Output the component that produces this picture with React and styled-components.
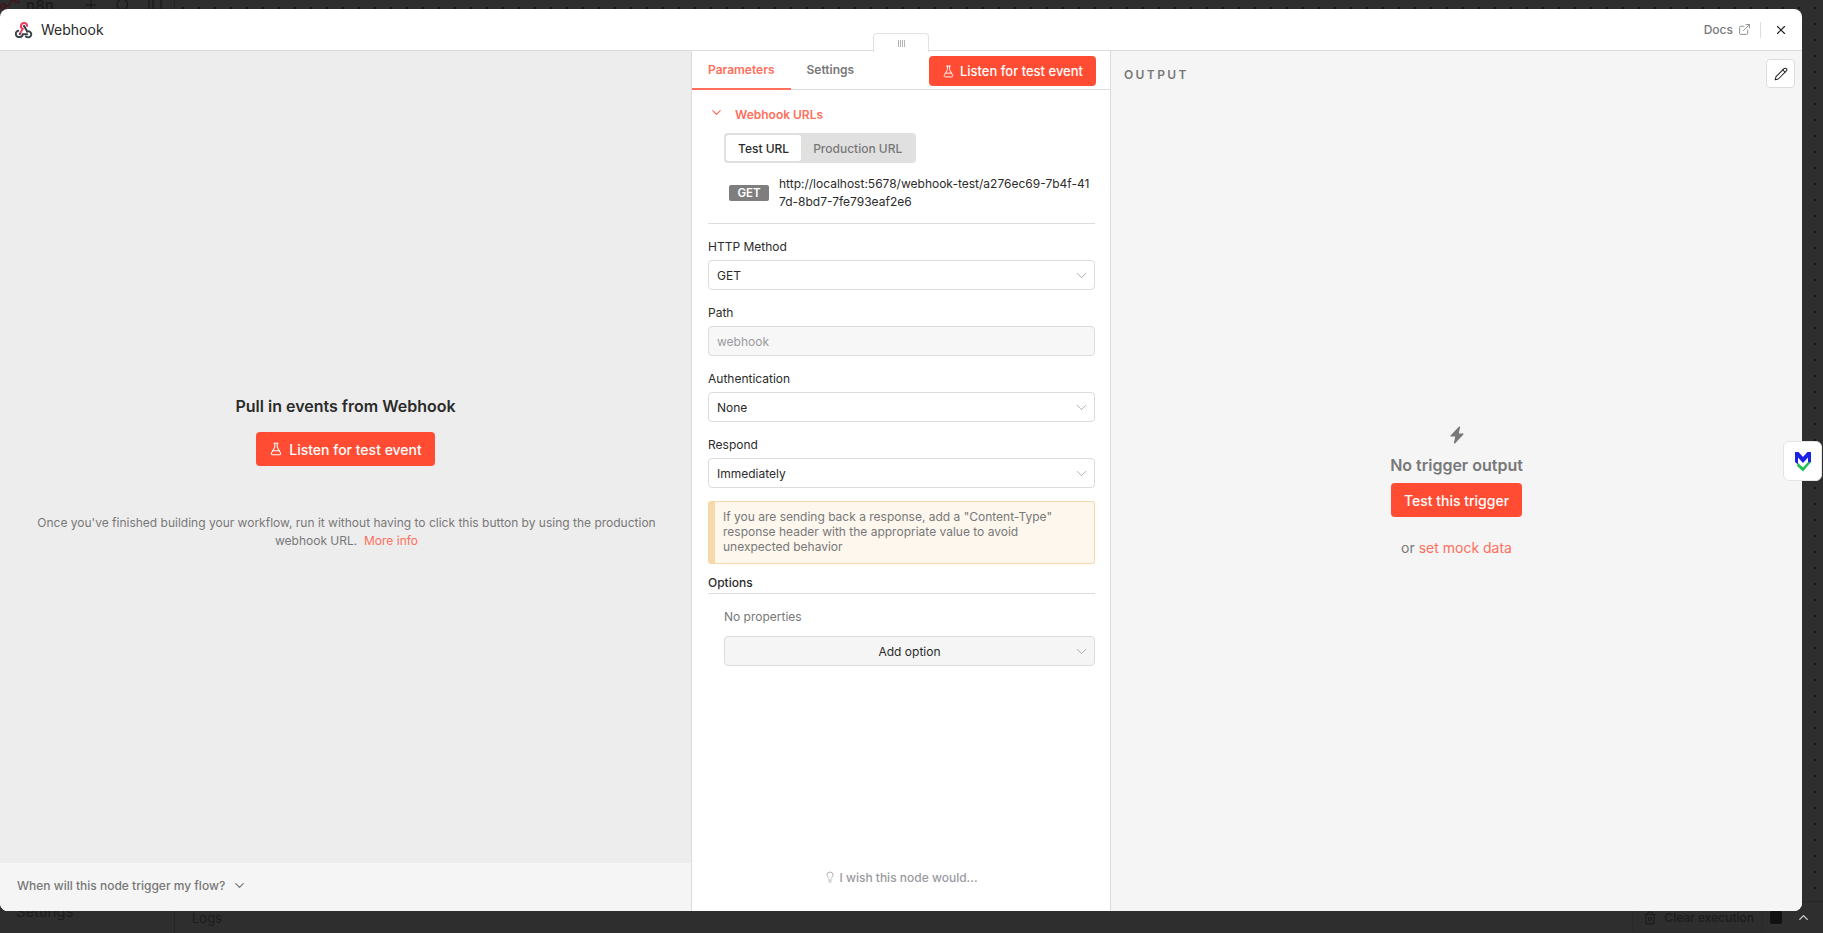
import styled, { createGlobalStyle } from "styled-components";
import {
  ChevronDown,
  ChevronUp,
  ExternalLink,
  FlaskConical,
  Lightbulb,
  PanelLeft,
  Pencil,
  Plus,
  Search,
  Trash2,
  X,
} from "lucide-react";

const GlobalStyle = createGlobalStyle`
  html, body {
    margin: 0;
    height: 100%;
    background: #2e2e2e;
    font-family: Inter, "Liberation Sans", sans-serif;
  }
  * {
    box-sizing: border-box;
  }
`;

const Page = styled.div`
  position: relative;
  width: 1823px;
  height: 933px;
  overflow: hidden;
  display: grid;
  grid-template-columns: 175px 1fr;
  background: #2e2e2e;
  color: #1c1c1c;
`;

const Sidebar = styled.div`
  display: flex;
  flex-direction: column;
  justify-content: space-between;
  border-right: 1px solid #262626;
`;

const SideTop = styled.div`
  display: flex;
  align-items: center;
  height: 16px;
  margin-top: -3px;
  font-size: 15px;
  font-weight: 600;
`;

const SideLogo = styled.span`
  display: flex;
  width: 26px;
`;

const SideIcons = styled.div`
  display: flex;
  gap: 16px;
  margin-left: 29px;
`;

const SideBottom = styled.div`
  padding: 0 0 12px 16px;
  font-size: 15px;
`;

const Main = styled.div`
  display: flex;
  flex-direction: column;
  background-color: #2e2e2e;
  background-image: radial-gradient(#151515 0.8px, transparent 1px);
  background-size: 16px 16px;
`;

const Canvas = styled.div`
  flex: 1;
`;

const LogsBar = styled.div`
  height: 32px;
  padding: 0 12px 0 17px;
  display: flex;
  align-items: center;
  justify-content: space-between;
  font-size: 13px;
  background: #2e2e2e;
  border-top: 1px solid #262626;
`;

const LogsActions = styled.div`
  display: flex;
  align-items: center;
`;

const ClearExec = styled.div`
  display: flex;
  align-items: center;
  gap: 7px;
  height: 30px;
  padding: 0 8px 0 10px;
  border: 1px solid #2a2a2a;
  border-radius: 4px;
  font-size: 12px;
  font-weight: 500;
`;

const PopOut = styled.span`
  width: 12px;
  height: 13px;
  margin: 0 14px 0 7px;
  border-radius: 2px;
  background: #111;
`;

const Modal = styled.div`
  position: absolute;
  left: 0;
  top: 9px;
  width: 1802px;
  height: 902px;
  display: flex;
  flex-direction: column;
  background: #fff;
  border-radius: 8px;
  overflow: hidden;
`;

const Header = styled.header`
  flex: none;
  height: 42px;
  display: flex;
  align-items: center;
  justify-content: space-between;
  padding: 0 14px 0 15px;
  border-bottom: 1px solid #dcdcdc;
`;

const TitleGroup = styled.div`
  display: flex;
  align-items: center;
  gap: 8px;
`;

const Title = styled.h1`
  margin: 0;
  font-size: 14px;
  font-weight: 400;
  color: #2a2a2a;
`;

const HeaderActions = styled.div`
  display: flex;
  align-items: center;
`;

const DocsLink = styled.a`
  display: flex;
  align-items: center;
  gap: 5px;
  font-size: 12px;
  font-weight: 500;
  color: #787878;
`;

const HeaderDivider = styled.span`
  width: 1px;
  height: 16px;
  margin: 0 13px 0 9px;
  background: #dcdcdc;
`;

const Panels = styled.div`
  flex: 1;
  min-height: 0;
  display: grid;
  grid-template-columns: 691px 420px 1fr;
`;

const InputPanel = styled.section`
  display: flex;
  flex-direction: column;
  background: #ededed;
`;

const InputBody = styled.div`
  flex: 1;
  display: flex;
  flex-direction: column;
  align-items: center;
  padding-top: 345px;
`;

const PanelTitle = styled.h2`
  margin: 0;
  font-size: 16px;
  line-height: 20px;
  font-weight: 600;
  color: #2b2b2b;
`;

const PrimaryButton = styled.button`
  display: inline-flex;
  align-items: center;
  justify-content: center;
  gap: 6px;
  height: 34px;
  padding: 0 13px;
  border: none;
  border-radius: 4px;
  background: #ff4c33;
  color: #fff;
  font-family: inherit;
  font-size: 14px;
  font-weight: 500;
`;

const CenterListen = styled(PrimaryButton)`
  margin-top: 16px;
`;

const HintText = styled.p`
  width: 640px;
  margin: 48px 0 0 2px;
  text-align: center;
  font-size: 12px;
  line-height: 18px;
  color: #787878;
`;

const Link = styled.a`
  color: #ff6f5c;
`;

const TriggerFooter = styled.div`
  flex: none;
  height: 48px;
  display: flex;
  align-items: center;
  gap: 7px;
  padding: 0 0 4px 17px;
  background: #f5f5f5;
  font-size: 12px;
  font-weight: 500;
  color: #787878;
`;

const ParamsPanel = styled.section`
  position: relative;
  display: flex;
  flex-direction: column;
  background: #fff;
  border-left: 1px solid #dcdcdc;
  border-right: 1px solid #dcdcdc;
`;

const DragHandle = styled.div`
  position: absolute;
  left: 181px;
  top: -18px;
  width: 56px;
  height: 19px;
  display: flex;
  align-items: center;
  justify-content: center;
  gap: 1px;
  background: #fff;
  border: 1px solid #e2e2e2;
  border-bottom: none;
  border-radius: 4px 4px 0 0;
`;

const GripBar = styled.span`
  width: 1px;
  height: 7px;
  background: #b4b4b4;
`;

const TabBar = styled.div`
  flex: none;
  height: 39px;
  display: flex;
  align-items: flex-start;
  justify-content: space-between;
  padding-right: 14px;
  border-bottom: 1px solid #dcdcdc;
`;

const Tabs = styled.div`
  display: flex;
`;

const Tab = styled.div`
  height: 39px;
  padding: 11px 16px 0;
  font-size: 12px;
  font-weight: 600;
  line-height: 16px;
  color: ${(props) => (props.$active ? "#ff6f5c" : "#787878")};
  border-bottom: ${(props) => (props.$active ? "2px solid #ff6f5c" : "none")};
`;

const ListenButton = styled(PrimaryButton)`
  height: 30px;
  gap: 5px;
  margin-top: 5px;
  font-size: 13px;
`;

const ParamsBody = styled.div`
  flex: 1;
  display: flex;
  flex-direction: column;
  padding: 0 15px 0 16px;
`;

const UrlsHeader = styled.div`
  display: flex;
  align-items: flex-start;
  margin-top: 15px;
  height: 20px;
  font-size: 12px;
  font-weight: 600;
  line-height: 20px;
  color: #ff6f5c;
`;

const Chevron = styled.span`
  display: flex;
  width: 27px;
  padding-left: 1px;
`;

const Segmented = styled.div`
  align-self: flex-start;
  display: flex;
  margin: 8px 0 0 16px;
  padding: 2px;
  height: 30px;
  background: #e0e0e0;
  border-radius: 4px;
`;

const Segment = styled.div`
  display: flex;
  align-items: center;
  padding: 0 12px;
  font-size: 12px;
  font-weight: 500;
  border-radius: 3px;
  color: ${(props) => (props.$active ? "#2b2b2b" : "#787878")};
  background: ${(props) => (props.$active ? "#fff" : "transparent")};
`;

const UrlRow = styled.div`
  display: flex;
  align-items: flex-start;
  margin: 12px 0 0 21px;
  padding-bottom: 12px;
`;

const MethodBadge = styled.span`
  flex: none;
  width: 40px;
  height: 16px;
  margin-top: 10px;
  display: flex;
  align-items: center;
  justify-content: center;
  background: #7e7e7e;
  border-radius: 2px;
  color: #fff;
  font-size: 11.5px;
  font-weight: 600;
`;

const UrlText = styled.div`
  margin-left: 10px;
  width: 322px;
  font-size: 12px;
  line-height: 18px;
  color: #2b2b2b;
  word-break: break-all;
`;

const Divider = styled.hr`
  width: 100%;
  margin: 0;
  border: none;
  border-top: 1px solid #dcdcdc;
`;

const Field = styled.div`
  margin-top: 15px;
`;

const FieldLabel = styled.label`
  display: block;
  height: 16px;
  margin-bottom: 5px;
  font-size: 12px;
  line-height: 16px;
  color: #2b2b2b;
`;

const Control = styled.div`
  height: 30px;
  display: flex;
  align-items: center;
  justify-content: space-between;
  padding: 0 4px 0 8px;
  border: 1px solid #dcdcdc;
  border-radius: 4px;
  font-size: 12px;
  color: ${(props) => (props.$disabled ? "#9a9aa0" : "#2b2b2b")};
  background: ${(props) => (props.$disabled ? "#f7f7f7" : "#fff")};
`;

const Callout = styled.div`
  margin-top: 13px;
  padding: 7px 10px 5px 8px;
  height: 63px;
  border: 1px solid #f5d9ab;
  border-left: 7px solid #f5d9ab;
  border-radius: 3px;
  background: #fdf7ee;
  font-size: 12px;
  line-height: 15px;
  color: #787878;
`;

const OptionsHeading = styled.div`
  margin-top: 11px;
  padding-bottom: 2px;
  border-bottom: 1px solid #dcdcdc;
  font-size: 12px;
  font-weight: 500;
  line-height: 16px;
  color: #2b2b2b;
`;

const OptionsBody = styled.div`
  margin-left: 16px;
`;

const EmptyNote = styled.div`
  margin-top: 15px;
  font-size: 12px;
  line-height: 16px;
  color: #787878;
`;

const AddOption = styled.div`
  position: relative;
  margin-top: 11px;
  height: 30px;
  display: flex;
  align-items: center;
  justify-content: center;
  border: 1px solid #dcdcdc;
  border-radius: 4px;
  background: #f5f5f5;
  font-size: 12px;
  color: #2b2b2b;
`;

const AddChevron = styled.span`
  position: absolute;
  right: 4px;
  top: 6px;
  display: flex;
`;

const Feedback = styled.div`
  flex: none;
  height: 48px;
  display: flex;
  align-items: center;
  justify-content: center;
  gap: 3px;
  padding-bottom: 20px;
  font-size: 12px;
  font-weight: 500;
  color: #9a9aa0;
`;

const OutputPanel = styled.section`
  position: relative;
  display: flex;
  flex-direction: column;
  align-items: center;
  background: #f5f5f5;
`;

const OutputLabel = styled.div`
  align-self: flex-start;
  margin: 16px 0 0 13px;
  font-size: 12px;
  font-weight: 600;
  line-height: 16px;
  letter-spacing: 2.4px;
  color: #787878;
`;

const EditButton = styled.button`
  position: absolute;
  right: 7px;
  top: 8px;
  width: 29px;
  height: 29px;
  display: flex;
  align-items: center;
  justify-content: center;
  padding: 0;
  border: 1px solid #dcdcdc;
  border-radius: 4px;
  background: #fff;
`;

const BoltIcon = styled.div`
  display: flex;
  margin-top: 343px;
  color: #787878;
`;

const EmptyTitle = styled.h3`
  margin: 11px 0 8px;
  font-size: 16px;
  line-height: 20px;
  font-weight: 600;
  color: #787878;
`;

const MockLine = styled.p`
  margin: 21px 0 0;
  font-size: 14px;
  line-height: 20px;
  color: #787878;
`;

const ExtensionTab = styled.div`
  position: absolute;
  left: 1783px;
  top: 441px;
  width: 39px;
  height: 40px;
  display: flex;
  align-items: center;
  justify-content: center;
  background: #fff;
  border: 1px solid #e4e4e4;
  border-radius: 6px;
`;

function WebhookLogo() {
  return (
    <svg width="18" height="18" viewBox="0 0 18 18" fill="none" strokeWidth="2" strokeLinecap="round">
      <path d="M5.9 5.2a3.1 3.1 0 0 1 6.2-.2" stroke="#ea3e66" />
      <path d="M6.4 7a3 3 0 0 1-.5-1.8" stroke="#ea3e66" />
      <path d="M7.9 7.6L5 12.5" stroke="#ea3e66" />
      <path d="M9.3 5.3L12 10.3" stroke="#3a4048" />
      <circle cx="9" cy="5" r="1.1" fill="#3a4048" />
      <circle cx="4.8" cy="13" r="1.1" fill="#3a4048" />
      <path d="M12 10.6a3 3 0 1 1 1 5.7 3 3 0 0 1-2-.8" stroke="#3a4048" />
      <path d="M3.2 9.8a3.2 3.2 0 0 0 1.6 6.2 3.1 3.1 0 0 0 3-2.8h4.4" stroke="#3a4048" />
    </svg>
  );
}

function WorkflowMark() {
  return (
    <svg width="20" height="16" viewBox="0 0 20 16" fill="none" stroke="#3c1a1e" strokeWidth="2">
      <circle cx="3" cy="9" r="2.2" />
      <circle cx="17" cy="3" r="2.2" />
      <path d="M5 9h3c2 0 2-6 4-6h3" />
    </svg>
  );
}

function ShieldLogo() {
  return (
    <svg width="18" height="21" viewBox="0 0 18 21" fill="none">
      <path d="M1 1h3.6L9 6l4.4-5H17v10l-3 2.4V6.6L9 12 4 6.6v6.8l-3-2.4z" fill="#1a22e8" />
      <path d="M4 12l5 4.5 5-5.4 2.6.3-7.6 9.1L3 15z" fill="#1fbf55" />
    </svg>
  );
}

function BoltGlyph() {
  return (
    <svg width="14" height="18" viewBox="0 0 14 18" fill="currentColor" stroke="currentColor" strokeWidth="1.2" strokeLinejoin="round">
      <path d="M9.5 1L1 10h5l-1.5 7L13 8H8z" />
    </svg>
  );
}

function SelectChevron() {
  return <ChevronDown size={17} color="#9a9aa0" strokeWidth={1.1} />;
}

function SelectField({ label, value }) {
  return (
    <Field>
      <FieldLabel>{label}</FieldLabel>
      <Control>
        {value}
        <SelectChevron />
      </Control>
    </Field>
  );
}

function App() {
  return (
    <>
      <GlobalStyle />
      <Page>
        <Sidebar>
          <SideTop>
            <SideLogo>
              <WorkflowMark />
            </SideLogo>
            n8n
            <SideIcons>
              <Plus size={16} />
              <Search size={16} />
              <PanelLeft size={16} />
            </SideIcons>
          </SideTop>
          <SideBottom>Settings</SideBottom>
        </Sidebar>
        <Main>
          <Canvas />
          <LogsBar>
            Logs
            <LogsActions>
              <ClearExec>
                <Trash2 size={14} />
                Clear execution
              </ClearExec>
              <PopOut />
              <ChevronUp size={15} color="#d8d8d8" strokeWidth={2} />
            </LogsActions>
          </LogsBar>
        </Main>

        <Modal>
          <Header>
            <TitleGroup>
              <WebhookLogo />
              <Title>Webhook</Title>
            </TitleGroup>
            <HeaderActions>
              <DocsLink>
                Docs
                <ExternalLink size={13} strokeWidth={1.5} />
              </DocsLink>
              <HeaderDivider />
              <X size={14} color="#222" strokeWidth={2} />
            </HeaderActions>
          </Header>

          <Panels>
            <InputPanel>
              <InputBody>
                <PanelTitle>Pull in events from Webhook</PanelTitle>
                <CenterListen>
                  <FlaskConical size={14} strokeWidth={1.75} />
                  Listen for test event
                </CenterListen>
                <HintText>
                  Once you've finished building your workflow, run it without having to click this
                  button by using the production webhook URL. &nbsp;<Link>More info</Link>
                </HintText>
              </InputBody>
              <TriggerFooter>
                When will this node trigger my flow?
                <ChevronDown size={15} strokeWidth={2} />
              </TriggerFooter>
            </InputPanel>

            <ParamsPanel>
              <DragHandle>
                <GripBar />
                <GripBar />
                <GripBar />
                <GripBar />
              </DragHandle>
              <TabBar>
                <Tabs>
                  <Tab $active>Parameters</Tab>
                  <Tab>Settings</Tab>
                </Tabs>
                <ListenButton>
                  <FlaskConical size={13} strokeWidth={1.75} />
                  Listen for test event
                </ListenButton>
              </TabBar>
              <ParamsBody>
                <UrlsHeader>
                  <Chevron>
                    <ChevronDown size={15} strokeWidth={2} />
                  </Chevron>
                  Webhook URLs
                </UrlsHeader>
                <Segmented>
                  <Segment $active>Test URL</Segment>
                  <Segment>Production URL</Segment>
                </Segmented>
                <UrlRow>
                  <MethodBadge>GET</MethodBadge>
                  <UrlText>http://localhost:5678/webhook-test/a276ec69-7b4f-417d-8bd7-7fe793eaf2e6</UrlText>
                </UrlRow>
                <Divider />
                <SelectField label="HTTP Method" value="GET" />
                <Field>
                  <FieldLabel>Path</FieldLabel>
                  <Control $disabled>webhook</Control>
                </Field>
                <SelectField label="Authentication" value="None" />
                <SelectField label="Respond" value="Immediately" />
                <Callout>
                  If you are sending back a response, add a "Content-Type" response header with the
                  appropriate value to avoid unexpected behavior
                </Callout>
                <OptionsHeading>Options</OptionsHeading>
                <OptionsBody>
                  <EmptyNote>No properties</EmptyNote>
                  <AddOption>
                    Add option
                    <AddChevron>
                      <SelectChevron />
                    </AddChevron>
                  </AddOption>
                </OptionsBody>
              </ParamsBody>
              <Feedback>
                <Lightbulb size={12} strokeWidth={1.5} />I wish this node would...
              </Feedback>
            </ParamsPanel>

            <OutputPanel>
              <OutputLabel>OUTPUT</OutputLabel>
              <EditButton>
                <Pencil size={14} color="#222" strokeWidth={1.75} />
              </EditButton>
              <BoltIcon>
                <BoltGlyph />
              </BoltIcon>
              <EmptyTitle>No trigger output</EmptyTitle>
              <PrimaryButton>Test this trigger</PrimaryButton>
              <MockLine>
                or <Link>set mock data</Link>
              </MockLine>
            </OutputPanel>
          </Panels>
        </Modal>

        <ExtensionTab>
          <ShieldLogo />
        </ExtensionTab>
      </Page>
    </>
  );
}

export default App;
